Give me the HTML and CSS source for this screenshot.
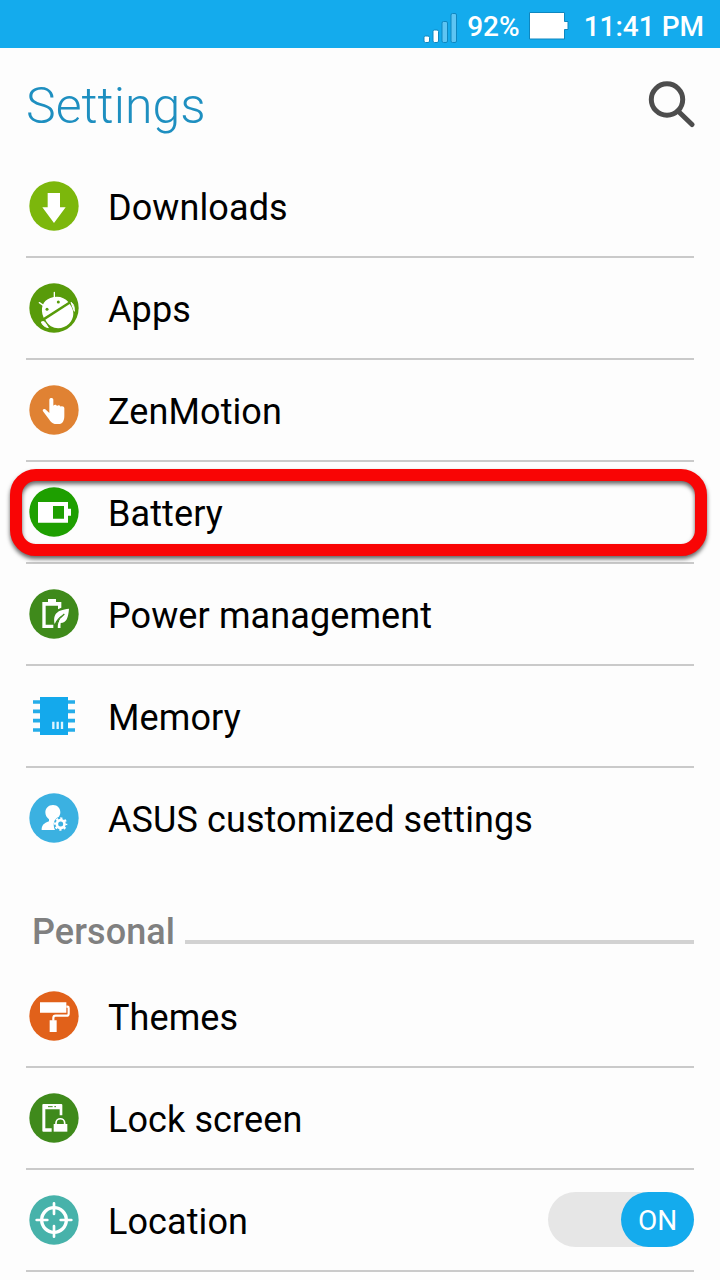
FILE: index.html
```html
<!DOCTYPE html>
<html lang="en">
<head>
<meta charset="utf-8">
<title>Settings</title>
<link rel="stylesheet" href="styles.css">
</head>
<body>
<div class="screen">
  <div class="status">
    <svg class="signal" width="36" height="32" viewBox="0 0 36 32">
      <g stroke="#0e87c0" stroke-width="1">
        <rect x="1" y="23" width="5.500" height="6.500" rx="1.500" fill="#fff"/>
        <rect x="10" y="17" width="5.500" height="12.500" rx="1.500" fill="#fff"/>
        <rect x="19" y="8.500" width="5.500" height="21" rx="1.500" fill="#5ec5f3"/>
        <rect x="28" y=".5" width="5.500" height="29" rx="1.500" fill="#5ec5f3"/>
      </g>
    </svg>
    <span class="percent">92%</span>
    <svg class="cell" width="40" height="28" viewBox="0 0 40 28">
      <path d="M.5.5h35v9h3.500v8h-3.500v9.500h-35z" fill="#fff" stroke="#0e87c0"/>
    </svg>
    <span class="clock">11:41 PM</span>
  </div>

  <header class="header">
    <h1 class="title">Settings</h1>
    <svg class="search" width="48" height="48" viewBox="0 0 48 48" fill="none" stroke="#4d4d4d" stroke-width="5">
      <circle cx="20" cy="19.500" r="15.700"/>
      <path d="M31 31 45 44.500" stroke-linecap="round"/>
    </svg>
  </header>

  <div class="list">
    <div class="row">
      <svg class="icon" viewBox="45 33 150 150">
        <circle cx="120" cy="108" r="74" fill="#7cb70c"/>
        <path d="M101 69h37v43h17l-35 47-35-47h16z" fill="#fff"/>
      </svg>
      <span class="label">Downloads</span>
    </div>
    <div class="row">
      <svg class="icon" viewBox="45 39 150 150">
        <circle cx="120" cy="114" r="74" fill="#589b0a"/>
        <path d="M89 143C77 116 87 91 109 84c22-8 42-2 54 12z" fill="#fff"/>
        <path d="M94 149 167 102c15 19 15 42-2 59-21 20-56 19-71-12z" fill="#fff"/>
        <path d="M171 97c8 5 10 12 10 27zM82 156c6-3 10-1 12 3l9 14c-11-2-18-8-21-17z" fill="#fff" stroke="#fff" stroke-width="3" stroke-linejoin="round"/>
        <path d="M121 67v16M76 98l13 9" stroke="#fff" stroke-width="4" stroke-linecap="round"/>
        <circle cx="99" cy="118" r="4.500" fill="#589b0a"/><circle cx="133" cy="96" r="4.500" fill="#589b0a"/>
      </svg>
      <span class="label">Apps</span>
    </div>
    <div class="row">
      <svg class="icon" viewBox="45 45 150 150">
        <circle cx="120" cy="120" r="74" fill="#e08233"/>
        <path d="M106 90c0-8 12-8 12 0v17c3-4 9-4 11 1 3-4 9-3 11 2 5-3 11 0 11 5v22c0 14-5 23-14 25h-15c-8-1-12-7-17-14L87 124c-3-5 2-9 7-6l12 11z" fill="#fff"/>
      </svg>
      <span class="label">ZenMotion</span>
    </div>
    <div class="row">
      <svg class="icon" viewBox="87 81 150 150">
        <circle cx="162" cy="156" r="74" fill="#1e9f00"/>
        <path fill="#fff" fill-rule="evenodd" d="M114 126h90v20h9v21h-9v21h-90zM159 138v38h33v-38z"/>
      </svg>
      <span class="label">Battery</span>
      <div class="highlight"></div>
    </div>
    <div class="row">
      <svg class="icon" viewBox="45 45 150 150">
        <circle cx="120" cy="120" r="74" fill="#3f8a1b"/>
        <path d="M85 84h17V75h24v9h16v17l-10 5V95H95v57h23v10H85z" fill="#fff"/>
        <path d="M122 150c-5-27 3-42 43-46-2 27-8 45-28 43l2 15h-9c-2-14 3-28 17-40-12 7-20 15-25 28z" fill="#fff"/>
        <path d="M129 164c-1-20 7-32 22-44" fill="none" stroke="#3f8a1b" stroke-width="4"/>
        <path d="M136 162c-1-12 1-20 6-28" fill="none" stroke="#fff" stroke-width="6"/>
      </svg>
      <span class="label">Power management</span>
    </div>
    <div class="row">
      <svg class="icon" viewBox="45 45 150 150">
        <path d="M57 78h126M57 106h126M57 134h126M57 162h126" stroke="#25ade9" stroke-width="11"/>
        <path d="M78 63h84v114H78z" fill="#14a9ec"/>
        <path d="M118 137v22M131 137v22M144 137v22" stroke="#dff5ff" stroke-width="7"/>
      </svg>
      <span class="label">Memory</span>
    </div>
    <div class="row row-last">
      <svg class="icon" viewBox="45 45 150 150">
        <circle cx="120" cy="120" r="74" fill="#3bb1e1"/>
        <path d="M117 81c14 0 22 10 22 22 0 6-2 10-5 14-14 5-19 22-11 39H83c0-14 6-20 22-26v-6c-7-5-11-12-11-21 0-12 9-22 23-22z" fill="#fff"/>
        <circle cx="140" cy="138" r="11.500" fill="none" stroke="#fff" stroke-width="8"/>
        <circle cx="140" cy="138" r="17" fill="none" stroke="#fff" stroke-width="6" stroke-dasharray="6.676 6.676" stroke-dashoffset="3.338"/>
      </svg>
      <span class="label">ASUS customized settings</span>
    </div>
  </div>

  <div class="section">
    <h2 class="section-title">Personal</h2>
    <div class="section-line"></div>
  </div>

  <div class="list">
    <div class="row">
      <svg class="icon" viewBox="45 45 150 150">
        <circle cx="120" cy="120" r="74" fill="#e1611a"/>
        <path d="M78 79h79v31H78zM107 133h21v35h-21z" fill="#fff"/>
        <path d="M157 92h3q4 0 4 4v17q0 6-6 6h-33q-7 0-7 7v8" fill="none" stroke="#fff" stroke-width="6.500"/>
      </svg>
      <span class="label">Themes</span>
    </div>
    <div class="row">
      <svg class="icon" viewBox="45 45 150 150">
        <circle cx="120" cy="120" r="74" fill="#3f8a1b"/>
        <path d="M88 78h54q3 0 3 3v31h-8V94H94v57h19v10H88q-3 0-3-3V81q0-3 3-3z" fill="#fff"/>
        <path d="M102 86h14M121 86h5" stroke="#3f8a1b" stroke-width="3"/>
        <path d="M119 138h41v23h-41z" fill="#fff"/>
        <path d="M126 139v-4c0-17 26-17 26 0v4" fill="none" stroke="#fff" stroke-width="5"/>
      </svg>
      <span class="label">Lock screen</span>
    </div>
    <div class="row">
      <svg class="icon" viewBox="45 351 150 150">
        <circle cx="120" cy="426" r="74" fill="#47b2aa"/>
        <circle cx="120" cy="426" r="37" fill="none" stroke="#fff" stroke-width="10"/>
        <path d="M120 376v32M120 444v32M68 426h32M140 426h32" stroke="#fff" stroke-width="8" stroke-linecap="round"/>
      </svg>
      <span class="label">Location</span>
      <div class="toggle"><span class="knob">ON</span></div>
    </div>
  </div>
</div>
</body>
</html>
```

FILE: styles.css
```css
body {
  margin: 0;
  background: #fdfdfd;
  font-family: Roboto, "Liberation Sans", sans-serif;
  color: #000;
}

.screen {
  width: 720px;
  height: 1280px;
  overflow: hidden;
}

.status {
  box-sizing: border-box;
  height: 48px;
  padding-right: 16px;
  display: flex;
  justify-content: flex-end;
  align-items: center;
  background: #14abed;
  color: #fff;
  font-size: 28px;
  font-weight: 500;
  line-height: 48px;
}

.signal {
  margin: 10px 8px 0 0;
}

.percent {
  margin: 6px 9px 0 0;
}

.cell {
  margin: 3px 15px 0 0;
}

.clock {
  margin-top: 6px;
}

.header {
  box-sizing: border-box;
  height: 108px;
  padding: 0 25px 0 26px;
  display: flex;
  justify-content: space-between;
}

.title {
  margin: 28px 0 0;
  font-size: 50px;
  font-weight: 300;
  line-height: 60px;
  color: #1e8fc0;
}

.search {
  margin-top: 32px;
}

.list {
  padding: 0 26px;
}

.row {
  position: relative;
  height: 100px;
  border-bottom: 2px solid #cacaca;
  display: flex;
  align-items: center;
}

.row-last {
  border-bottom-color: transparent;
}

.icon {
  width: 50px;
  height: 50px;
  margin: 0 29px 0 3px;
}

.label {
  padding-top: 3px;
  font-size: 36px;
  line-height: 44px;
  letter-spacing: 0.1px;
}

.highlight {
  position: absolute;
  top: 7px;
  left: -16px;
  box-sizing: border-box;
  width: 697px;
  height: 87px;
  border: 12px solid #f90505;
  border-radius: 26px;
  filter: drop-shadow(0 3px 2px rgba(0, 0, 0, 0.6));
}

.section {
  height: 96px;
  padding: 0 26px 0 32px;
  display: flex;
  align-items: flex-start;
}

.section-title {
  margin: 40px 10px 0 0;
  font-size: 36px;
  font-weight: 500;
  line-height: 44px;
  letter-spacing: 0.1px;
  color: #808080;
}

.section-line {
  flex: 1;
  height: 4px;
  margin-top: 70px;
  background: #d2d2d2;
}

.toggle {
  width: 146px;
  height: 55px;
  margin: 0 0 1px auto;
  border-radius: 28px;
  background: #e6e6e6;
  display: flex;
  justify-content: flex-end;
}

.knob {
  width: 73px;
  border-radius: 28px;
  background: #14abed;
  color: #fff;
  font-size: 28px;
  line-height: 57px;
  text-align: center;
}
```
